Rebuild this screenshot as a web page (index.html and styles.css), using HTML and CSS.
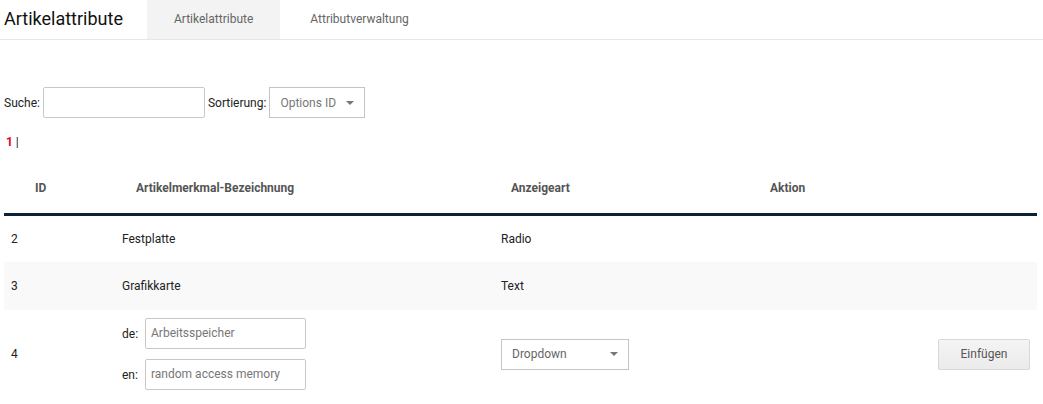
FILE: index.html
```html
<!DOCTYPE html>
<html lang="de">
<head>
<meta charset="utf-8">
<title>Artikelattribute</title>
<link rel="stylesheet" href="styles.css">
</head>
<body>
<header class="topbar">
  <h1 class="title">Artikelattribute</h1>
  <nav class="tabs">
    <a class="tab active">Artikelattribute</a>
    <a class="tab">Attributverwaltung</a>
  </nav>
</header>

<div class="filter">
  <label class="flabel">Suche:</label>
  <div class="input search"></div>
  <label class="flabel">Sortierung:</label>
  <div class="select sort"><span>Options ID</span><i class="caret"></i></div>
</div>

<div class="pager"><b>1</b> |</div>

<table class="grid">
  <colgroup>
    <col class="c1"><col class="c2"><col class="c3"><col class="c4">
  </colgroup>
  <thead>
    <tr>
      <th class="h1">ID</th>
      <th class="h2">Artikelmerkmal-Bezeichnung</th>
      <th class="h3">Anzeigeart</th>
      <th class="h4">Aktion</th>
    </tr>
  </thead>
  <tbody>
    <tr><td>2</td><td>Festplatte</td><td>Radio</td><td></td></tr>
    <tr class="alt"><td>3</td><td>Grafikkarte</td><td>Text</td><td></td></tr>
    <tr class="new">
      <td>4</td>
      <td>
        <div class="langs">
          <div class="lang"><span class="ll">de:</span><div class="input name">Arbeitsspeicher</div></div>
          <div class="lang"><span class="ll">en:</span><div class="input name">random access memory</div></div>
        </div>
      </td>
      <td><div class="select type"><span>Dropdown</span><i class="caret"></i></div></td>
      <td class="act"><button class="btn">Einfügen</button></td>
    </tr>
  </tbody>
</table>
</body>
</html>
```

FILE: styles.css
```css
* { box-sizing: border-box; }
html, body { margin: 0; padding: 0; background: #fff; }
body {
  font-family: Roboto, "Liberation Sans", sans-serif;
  font-size: 12px;
  color: #222;
  width: 1043px;
  height: 404px;
  overflow: hidden;
}
.topbar {
  display: flex;
  align-items: stretch;
  height: 40px;
  border-bottom: 1px solid #e6e6e6;
}
.title {
  margin: 0;
  padding: 0 24px 0 4px;
  font-size: 18px;
  font-weight: 400;
  line-height: 38px;
  color: #111;
  width: 147px;
}
.tabs { display: flex; }
.tab {
  display: block;
  line-height: 39px;
  padding: 0 27px;
  color: #666;
  font-size: 12px;
}
.tab.active { background: #f3f3f3; }
.tab + .tab { padding-left: 30px; }

.filter {
  display: flex;
  align-items: center;
  margin-top: 47px;
  padding-left: 4px;
  height: 31px;
}
.flabel { font-size: 12px; color: #222; margin-right: 3px; }
.input {
  height: 31px;
  border: 1px solid #c8c8c8;
  border-radius: 2px;
  background: #fff;
}
.search { width: 162px; margin-right: 3px; }
.select {
  height: 31px;
  border: 1px solid #c4c4c4;
  display: flex;
  align-items: center;
  justify-content: space-between;
  color: #777;
  padding: 0 10px;
}
.sort { width: 96px; }
.caret {
  width: 0; height: 0;
  border-left: 4px solid transparent;
  border-right: 4px solid transparent;
  border-top: 4px solid #777;
}
.pager {
  margin-top: 17px;
  padding-left: 6px;
  font-size: 12px;
  color: #222;
  line-height: 14px;
}
.pager b { color: #e3001b; }

.grid {
  margin: 17px 0 0 4px;
  width: 1033px;
  border-collapse: collapse;
  table-layout: fixed;
}
.c1 { width: 111px; }
.c2 { width: 379px; }
.c3 { width: 262px; }
.c4 { width: 281px; }
.grid th {
  text-align: left;
  font-weight: 700;
  color: #555;
  height: 48px;
  padding: 0 0 3px 0;
  border-bottom: 3px solid #0b2236;
}
.h1 { padding-left: 31px !important; }
.h2 { padding-left: 21px !important; }
.h3 { padding-left: 17px !important; }
.h4 { padding-left: 14px !important; }
.grid td {
  height: 48px;
  padding: 0 0 0 7px;
  vertical-align: middle;
}
.grid tr.alt td { background: #f9f9f9; }
.grid tr.new td { height: 88px; }
.langs { display: flex; flex-direction: column; gap: 10px; }
.lang { display: flex; align-items: center; }
.ll { width: 23px; text-align: left; color: #222; }
.name {
  width: 161px;
  height: 31px;
  line-height: 29px;
  padding: 0 5px;
  color: #777;
  border-color: #c8c8c8;
}
.type { width: 128px; height: 31px; }
.type span { color: #666; }
.act { text-align: right; padding-right: 7px !important; }
.btn {
  width: 92px;
  height: 31px;
  border: 1px solid #d8d8d8;
  border-radius: 2px;
  background: linear-gradient(#f4f4f4, #ebebeb);
  color: #555;
  font-family: inherit;
  font-size: 12px;
}
```
